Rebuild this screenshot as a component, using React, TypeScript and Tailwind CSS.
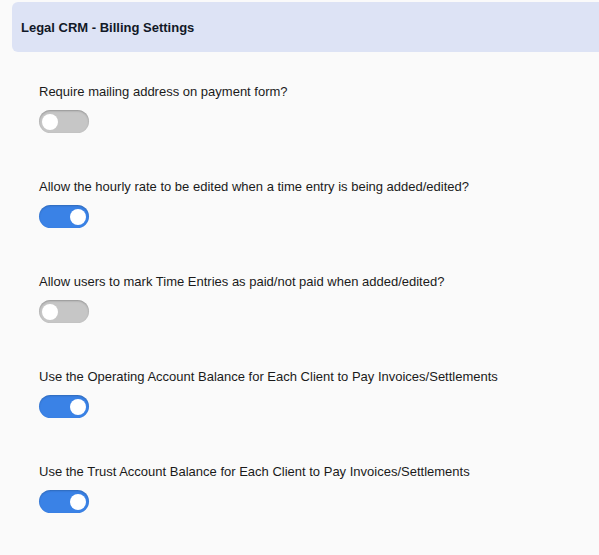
import { useState } from "react";

const settings = [
  { label: "Require mailing address on payment form?", on: false },
  { label: "Allow the hourly rate to be edited when a time entry is being added/edited?", on: true },
  { label: "Allow users to mark Time Entries as paid/not paid when added/edited?", on: false },
  { label: "Use the Operating Account Balance for Each Client to Pay Invoices/Settlements", on: true },
  { label: "Use the Trust Account Balance for Each Client to Pay Invoices/Settlements", on: true },
];

function Toggle({ checked, onChange }: { checked: boolean; onChange: () => void }) {
  return (
    <button
      type="button"
      onClick={onChange}
      className={
        "relative h-[23px] w-[50px] rounded-full " +
        (checked
          ? "bg-[#3a82e6] shadow-[inset_0_1px_2px_rgba(0,0,0,0.2)]"
          : "bg-[#c6c6c6] shadow-[inset_0_1px_2px_rgba(0,0,0,0.25)]")
      }
    >
      <span
        className={
          "absolute top-[3.5px] h-4 w-4 rounded-full bg-white " + (checked ? "left-[31px]" : "left-[3px]")
        }
      />
    </button>
  );
}

export default function App() {
  const [values, setValues] = useState(settings.map((s) => s.on));

  return (
    <div className="min-h-[555px] bg-[#fafafa] pt-[2px] pl-[12px] font-['Liberation_Sans',Arial,sans-serif] text-[#111]">
      <div className="flex h-[50px] items-center rounded-l-[6px] bg-[#dde3f5] pl-[9px] pt-[1px]">
        <h1 className="text-[13px] font-bold text-[#111827]">Legal CRM - Billing Settings</h1>
      </div>

      <div className="pt-[32px] pl-[27px]">
        {settings.map((s, i) => (
          <div key={s.label} className="h-[95px]">
            <p className="text-[13px] leading-[16px] text-[#1a1a1a]">{s.label}</p>
            <div className="mt-[10px] flex">
              <Toggle
                checked={values[i]}
                onChange={() => setValues((v) => v.map((x, j) => (j === i ? !x : x)))}
              />
            </div>
          </div>
        ))}
      </div>
    </div>
  );
}
